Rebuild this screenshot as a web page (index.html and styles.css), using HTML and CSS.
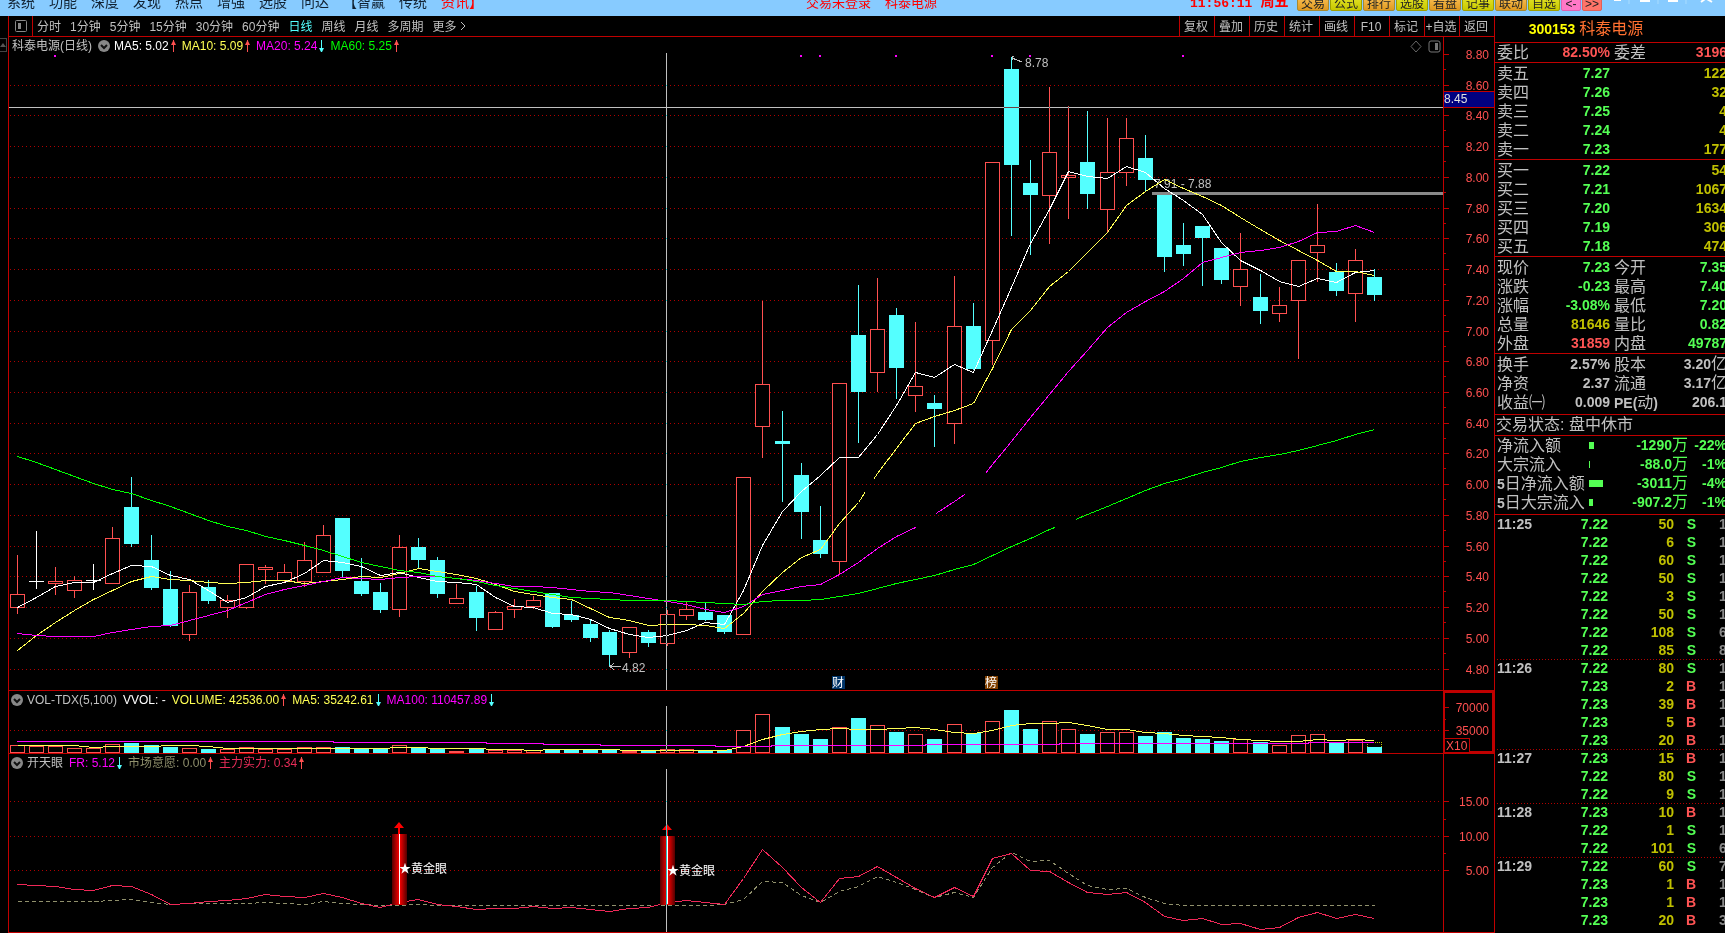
FILE: index.html
```
<!DOCTYPE html>
<html lang="zh-CN">
<head>
<meta charset="utf-8">
<title>科泰电源 300153</title>
<link rel="stylesheet" href="styles.css">
</head>
<body>
<header class="topbar">
  <nav class="menu">
    <a href="#">系统</a><a href="#">功能</a><a href="#">深度</a><a href="#">发现</a><a href="#">热点</a><a href="#">增强</a><a href="#">选股</a><a href="#">问达</a><a href="#">【智赢</a><a href="#">传统</a><a href="#" class="hot">资讯】</a>
  </nav>
  <div class="login"><span>交易未登录</span><span>科泰电源</span></div>
  <div class="clock"><time>11:56:11</time><span>周五</span></div>
  <div class="quick">
    <button class="orange">交易</button><button class="lime">公式</button><button class="orange">排行</button><button class="lime">选股</button><button class="orange">看盘</button><button class="lime">记事</button><button class="orange">联动</button><button class="lime">自选</button><button class="pink">&lt;-</button><button class="salmon">&gt;&gt;</button>
  </div>
  <svg class="winctl" width="123" height="12" viewBox="0 0 123 12" aria-hidden="true"><path d="M27 0v4M56 0v4M84 0v4" stroke="#a8dcff"/><path d="M12 0h7M38 1h10M66 1h10M99 2l4-3M105 -1l5 3" stroke="#fff" stroke-width="2" fill="none"/></svg>
</header>
<main class="workspace">
  <aside class="rail"><button class="fold" aria-label="展开"><svg width="7" height="14" viewBox="0 0 7 14"><path d="M0 8L3 4L6 8z" fill="#555"/></svg></button></aside>
  <section class="charts">
    <div class="toolbar">
      <button class="layout" aria-label="布局"><svg width="14" height="14" viewBox="0 0 14 14"><rect x="1.500" y="1.500" width="11" height="11" rx="1" fill="none" stroke="#888"/><path d="M4 4h3v6H4z" fill="#888"/></svg></button>
      <div class="periods">
        <button>分时</button><button>1分钟</button><button>5分钟</button><button>15分钟</button><button>30分钟</button><button>60分钟</button><button class="active">日线</button><button>周线</button><button>月线</button><button>多周期</button><button>更多 <svg width="6" height="10" viewBox="0 0 6 10"><path d="M1 1l4 4-4 4" fill="none" stroke="#c0c0c0"/></svg></button>
      </div>
      <div class="tools">
        <button>复权</button><button>叠加</button><button>历史</button><button>统计</button><button>画线</button><button>F10</button><button>标记</button><button>+自选</button><button>返回</button>
      </div>
    </div>
    <div class="panel price">
      <div class="plot">
        <svg id="pricePlot" viewBox="9 37 1434 653" preserveAspectRatio="none"></svg>
        <div class="legend">
          <span>科泰电源(日线)</span><svg class="drop" viewBox="0 0 12 12"><circle cx="6" cy="6" r="6"/><path d="M3 5l3 3 3-3"/></svg>
          <span class="white">MA5: 5.02<i class="up"></i></span><span class="yellow">MA10: 5.09<i class="up"></i></span><span class="magenta">MA20: 5.24<i class="down"></i></span><span class="green">MA60: 5.25<i class="up"></i></span>
        </div>
        <svg class="corner" width="31" height="13" viewBox="0 0 31 13"><path d="M6 1l5 5.500-5 5.500-5-5.500z" fill="none" stroke="#666"/><rect x="19" y="1" width="11" height="11" rx="2" fill="none" stroke="#777"/><path d="M25 3h3v7h-3z" fill="#777"/></svg>
      </div>
      <svg class="axis" id="priceAxis" viewBox="1443 37 51 653" preserveAspectRatio="none"></svg>
    </div>
    <div class="panel volume">
      <div class="plot">
        <svg id="volPlot" viewBox="9 691 1434 62" preserveAspectRatio="none"></svg>
        <div class="legend">
          <svg class="drop" viewBox="0 0 12 12"><circle cx="6" cy="6" r="6"/><path d="M3 5l3 3 3-3"/></svg>
          <span>VOL-TDX(5,100)</span><span class="white">VVOL: -</span><span class="yellow">VOLUME: 42536.00<i class="up"></i></span><span class="yellow">MA5: 35242.61<i class="down"></i></span><span class="magenta">MA100: 110457.89<i class="down"></i></span>
        </div>
      </div>
      <svg class="axis" id="volAxis" viewBox="1443 691 51 62" preserveAspectRatio="none"></svg>
    </div>
    <div class="panel signal">
      <div class="plot">
        <svg id="sigPlot" viewBox="9 754 1434 178" preserveAspectRatio="none"></svg>
        <div class="legend">
          <svg class="drop" viewBox="0 0 12 12"><circle cx="6" cy="6" r="6"/><path d="M3 5l3 3 3-3"/></svg>
          <span>开天眼</span><span class="magenta">FR: 5.12<i class="down"></i></span><span class="olive">市场意愿: 0.00<i class="up"></i></span><span class="rose">主力实力: 0.34<i class="up"></i></span>
        </div>
      </div>
      <svg class="axis" id="sigAxis" viewBox="1443 754 51 178" preserveAspectRatio="none"></svg>
    </div>
  </section>
  <aside class="quote">
    <h1><b>300153</b><span>科泰电源</span></h1>
    <table class="info tight"><tr><th>委比</th><td class="r">82.50%</td><th>委差</th><td class="r">3196</td></tr></table>
    <table class="info book">
      <tr><th>卖五</th><td class="g">7.27</td><td class="y">122</td></tr>
      <tr><th>卖四</th><td class="g">7.26</td><td class="y">32</td></tr>
      <tr><th>卖三</th><td class="g">7.25</td><td class="y">4</td></tr>
      <tr><th>卖二</th><td class="g">7.24</td><td class="y">4</td></tr>
      <tr><th>卖一</th><td class="g">7.23</td><td class="y">177</td></tr>
    </table>
    <table class="info book">
      <tr><th>买一</th><td class="g">7.22</td><td class="y">54</td></tr>
      <tr><th>买二</th><td class="g">7.21</td><td class="y">1067</td></tr>
      <tr><th>买三</th><td class="g">7.20</td><td class="y">1634</td></tr>
      <tr><th>买四</th><td class="g">7.19</td><td class="y">306</td></tr>
      <tr><th>买五</th><td class="g">7.18</td><td class="y">474</td></tr>
    </table>
    <table class="info">
      <tr><th>现价</th><td class="g">7.23</td><th>今开</th><td class="g">7.35</td></tr>
      <tr><th>涨跌</th><td class="g">-0.23</td><th>最高</th><td class="g">7.40</td></tr>
      <tr><th>涨幅</th><td class="g">-3.08%</td><th>最低</th><td class="g">7.20</td></tr>
      <tr><th>总量</th><td class="y">81646</td><th>量比</th><td class="g">0.82</td></tr>
      <tr><th>外盘</th><td class="r">31859</td><th>内盘</th><td class="g">49787</td></tr>
    </table>
    <table class="info pad">
      <tr><th>换手</th><td>2.57%</td><th>股本</th><td>3.20<span class="u">亿</span></td></tr>
      <tr><th>净资</th><td>2.37</td><th>流通</th><td>3.17<span class="u">亿</span></td></tr>
      <tr><th>收益㈠</th><td>0.009</td><th><b>PE(</b>动<b>)</b></th><td>206.1</td></tr>
    </table>
    <p class="status">交易状态: 盘中休市</p>
    <table class="flow">
      <tr><th>净流入额</th><td><i style="width:5px"></i></td><td>-1290<span class="u">万</span></td><td>-22%</td></tr>
      <tr><th>大宗流入</th><td><i style="width:1px"></i></td><td>-88.0<span class="u">万</span></td><td>-1%</td></tr>
      <tr><th><b>5</b>日净流入额</th><td><i style="width:14px"></i></td><td>-3011<span class="u">万</span></td><td>-4%</td></tr>
      <tr><th><b>5</b>日大宗流入</th><td><i style="width:4px"></i></td><td>-907.2<span class="u">万</span></td><td>-1%</td></tr>
    </table>
    <table class="ticks">
      <tr><th>11:25</th><td>7.22</td><td>50</td><td class="g">S</td><td>1</td></tr>
      <tr><th></th><td>7.22</td><td>6</td><td class="g">S</td><td>1</td></tr>
      <tr><th></th><td>7.22</td><td>60</td><td class="g">S</td><td>1</td></tr>
      <tr><th></th><td>7.22</td><td>50</td><td class="g">S</td><td>1</td></tr>
      <tr><th></th><td>7.22</td><td>3</td><td class="g">S</td><td>1</td></tr>
      <tr><th></th><td>7.22</td><td>50</td><td class="g">S</td><td>1</td></tr>
      <tr><th></th><td>7.22</td><td>108</td><td class="g">S</td><td>6</td></tr>
      <tr><th></th><td>7.22</td><td>85</td><td class="g">S</td><td>8</td></tr>
      <tr class="minute"><th>11:26</th><td>7.22</td><td>80</td><td class="g">S</td><td>1</td></tr>
      <tr><th></th><td>7.23</td><td>2</td><td class="r">B</td><td>1</td></tr>
      <tr><th></th><td>7.23</td><td>39</td><td class="r">B</td><td>1</td></tr>
      <tr><th></th><td>7.23</td><td>5</td><td class="r">B</td><td>1</td></tr>
      <tr><th></th><td>7.23</td><td>20</td><td class="r">B</td><td>1</td></tr>
      <tr class="minute"><th>11:27</th><td>7.23</td><td>15</td><td class="r">B</td><td>1</td></tr>
      <tr><th></th><td>7.22</td><td>80</td><td class="g">S</td><td>1</td></tr>
      <tr><th></th><td>7.22</td><td>9</td><td class="g">S</td><td>1</td></tr>
      <tr class="minute"><th>11:28</th><td>7.23</td><td>10</td><td class="r">B</td><td>1</td></tr>
      <tr><th></th><td>7.22</td><td>1</td><td class="g">S</td><td>1</td></tr>
      <tr><th></th><td>7.22</td><td>101</td><td class="g">S</td><td>6</td></tr>
      <tr class="minute"><th>11:29</th><td>7.22</td><td>60</td><td class="g">S</td><td>7</td></tr>
      <tr><th></th><td>7.23</td><td>1</td><td class="r">B</td><td>1</td></tr>
      <tr><th></th><td>7.23</td><td>1</td><td class="r">B</td><td>1</td></tr>
      <tr><th></th><td>7.23</td><td>20</td><td class="r">B</td><td>3</td></tr>
    </table>
  </aside>
</main>
<script src="chart.js"></script>
</body>
</html>
```
FILE: styles.css
```
*, *::after { box-sizing: border-box; }
body {
  margin: 0;
  height: 100vh;
  display: flex;
  flex-direction: column;
  overflow: hidden;
  background: #000;
  color: #c0c0c0;
  font: 12px/14px "Liberation Sans", "Noto Sans CJK SC", sans-serif;
}
button { margin: 0; padding: 0; border: 0; background: none; color: inherit; font: inherit; white-space: nowrap; }

/* top bar: its row of labels is cut by the top window edge */
.topbar {
  flex: none;
  height: 16px;
  display: flex;
  align-items: flex-start;
  overflow: hidden;
  background: #87cbff;
}
.menu { display: flex; gap: 14px; margin: -5px 0 0 7px; flex: 1; font-size: 14px; white-space: nowrap; }
.menu a { color: #102030; text-decoration: none; }
.menu .hot, .login, .clock { color: #f00; }
.login { display: flex; gap: 14px; margin-top: -4px; font-size: 13px; width: 384px; }
.clock { display: flex; gap: 8px; margin-top: -5px; width: 107px; font: bold 14px/14px "Liberation Mono", "Noto Sans CJK SC", monospace; white-space: nowrap; }
.clock time { font-size: 13px; line-height: 18px; }
.quick { display: flex; gap: 1px; margin-top: -7px; }
.quick button { width: 32px; height: 18px; padding-top: 3px; border: 1px solid #a88a30; border-radius: 2px; color: #222; line-height: 12px; }
.quick .orange { background: linear-gradient(#ffc860, #e09a20); }
.quick .lime { background: linear-gradient(#e8e830, #c8c800); border-color: #a0a000; }
.quick .pink { width: 20px; background: #ff78c8; border-color: #e060b0; }
.quick .salmon { width: 20px; background: #ff7468; border-color: #e06058; }
.winctl { flex: none; }

.workspace { flex: 1; display: flex; min-height: 0; }
.rail { flex: none; width: 9px; border-right: 1px solid #c00000; padding-top: 22px; }
.fold { display: block; width: 7px; height: 14px; border: 1px solid #444; border-left: 0; }
.fold svg { display: block; }
.charts { flex: 1; min-width: 0; display: grid; grid-template: 21px minmax(0, 654fr) minmax(0, 63fr) minmax(0, 179fr) / minmax(0, 1fr); }

.toolbar { display: flex; align-items: stretch; border-bottom: 1px solid #c00000; }
.layout { width: 24px; border-right: 1px solid #c00000; display: grid; place-items: center; }
.periods { flex: 1; display: flex; gap: 9px; padding: 1px 0 0 4px; }
.periods .active { color: #54ffff; }
.tools { display: flex; }
.tools button { width: 35px; border-left: 1px solid #c00000; padding: 1px 2px 0 0; }

.panel { display: flex; min-height: 0; border-bottom: 1px solid #c00000; }
.plot { flex: 1; min-width: 0; position: relative; }
.plot > svg:first-child { position: absolute; inset: 0; width: 100%; height: 100%; }
.axis { flex: none; width: 51px; height: 100%; }
.legend { position: absolute; left: 3px; top: 1px; height: 16px; display: flex; align-items: center; gap: 6px; white-space: nowrap; }
.legend .drop { width: 12px; height: 12px; margin-right: -2px; flex: none; }
.volume .legend, .signal .legend { left: 2px; }
.drop circle { fill: #888; }
.drop path { fill: none; stroke: #111; stroke-width: 2; }
.legend i { display: inline-block; position: relative; width: 5px; height: 12px; margin-left: 2px; vertical-align: -2px; background: linear-gradient(currentColor, currentColor) 2px 0 / 1px 100% no-repeat; }
.legend i::after { content: ""; position: absolute; left: 0; border: solid transparent; border-width: 0 2px; width: 5px; height: 0; }
.legend .up { color: #ff5050; }
.legend .up::after { top: 1px; border-bottom: 4px solid #ff5050; }
.legend .down { color: #54ffff; }
.legend .down::after { bottom: 0; border-top: 4px solid #54ffff; }
.corner { position: absolute; right: 2px; top: 3px; }
.white { color: #fff; }
.yellow { color: #ffff54; }
.magenta { color: #f0f; }
.green { color: #0f0; }
.olive { color: #90906c; }
.rose { color: #e82c58; }

.grid, .candles, .lines, .cross { shape-rendering: crispEdges; }
.grid path { stroke: #b00000; stroke-dasharray: 1 3; }
.tick { stroke: #c00000; shape-rendering: crispEdges; }
.axis text { fill: #ff5050; text-anchor: end; }
.axis .cursor { fill: #e0e0e0; text-anchor: start; }
.axis .unit { text-anchor: start; }
.note { fill: #c0c0c0; }
.badge { fill: #fff; font-size: 12px; }
.star { fill: #fff; }
.cross { stroke: #c0c0c0; mix-blend-mode: difference; }
.rise { fill: #000; stroke: #ff5050; }
.fall { fill: #54ffff; stroke: #54ffff; }
.flat { fill: none; stroke: #fff; }
.lines path { fill: none; }

.quote { flex: none; width: 231px; border-left: 1px solid #c00000; overflow: hidden; }
.quote h1 { margin: 0; height: 27px; border-bottom: 1px solid #c00000; display: flex; justify-content: center; align-items: center; gap: 4px; padding-right: 48px; font-size: 16px; font-weight: 400; line-height: 26px; color: #ff7030; }
.quote h1 b { color: #ff0; font-size: 14px; }
.quote table { width: 232px; table-layout: fixed; border-collapse: separate; border-spacing: 0; border-bottom: 1px solid #c00000; padding: 1px 0 0 2px; }
.quote .tight { padding-top: 0; }
.quote .pad { padding-bottom: 2px; }
.quote th, .quote td { padding: 0; height: 19px; line-height: 19px; white-space: nowrap; overflow: visible; }
.quote th { text-align: left; font-weight: 400; font-size: 16px; width: 54px; }
.quote td { text-align: right; font-weight: 700; font-size: 14px; width: 59px; }
.quote td + th { padding-left: 4px; width: 58px; }
.quote th b { font-size: 14px; line-height: 14px; }
.u { font-size: 16px; font-weight: 400; line-height: 14px; }
.book td:last-child { width: 117px; }
.g { color: #54ff54; }
.r { color: #ff5454; }
.y { color: #c0c000; }
.status { margin: 0; height: 21px; padding-left: 1px; font-size: 16px; line-height: 19px; border-bottom: 1px solid #c00000; white-space: nowrap; }
.quote .flow { padding-top: 0; padding-bottom: 2px; color: #54ff54; }
.flow th { color: #c0c0c0; width: 92px; }
.flow td:nth-child(2) { width: 15px; text-align: left; }
.flow td:nth-child(3) { width: 84px; }
.flow td:nth-child(4) { width: 39px; }
.flow i { display: block; height: 7px; background: #54ff54; }
.quote .ticks { border-bottom: 0; padding-top: 0; }
.quote .ticks th, .quote .ticks td { height: 18px; line-height: 18px; font-size: 14px; font-weight: 700; }
.quote .ticks td:nth-child(2) { width: 57px; color: #54ff54; }
.quote .ticks td:nth-child(3) { width: 66px; color: #c0c000; }
.quote .ticks td:nth-child(4) { width: 22px; }
.quote .ticks td:nth-child(5) { width: 31px; padding-left: 23px; color: #888; text-align: left; }
.minute { background: repeating-linear-gradient(90deg, #b00000 0 1px, #000 1px 3px) top / 100% 1px no-repeat; }
```
FILE: chart.js
```
// Each candle: kind, high, open/close top, open/close bottom, low (plot units)
const candles = [
['r',555,594,607,613],['w',531,581,581,588],['r',567,581,583,594],['r',576,580,590,597],['w',564,580,580,589],['r',527,538,583,583],
['c',477,507,544,546],['c',535,560,588,589],['c',571,589,626,626],['r',585,592,634,640],['c',580,587,601,603],['r',595,600,607,617],
['r',564,564,607,608],['r',565,567,569,583],['r',564,572,580,582],['r',542,560,581,586],['r',525,535,572,572],['c',518,518,571,577],
['c',558,581,594,595],['c',583,592,610,612],['r',535,547,609,616],['c',538,547,560,567],['c',557,560,594,597],['r',584,598,603,603],
['c',586,592,618,630],['r',611,612,629,629],['r',599,606,609,617],['r',596,600,606,608],['c',593,593,627,627],['c',601,615,620,621],
['c',620,624,638,641],['c',630,632,655,666],['r',627,627,652,657],['c',630,632,643,646],['r',610,614,643,645],['r',601,609,615,619],
['c',602,612,620,620],['c',615,615,632,633],['r',477,477,634,634],['r',301,384,426,457],['c',411,441,444,501],['c',463,475,512,538],
['c',506,540,554,557],['r',383,383,561,574],['c',285,335,392,442],['r',278,329,372,391],['c',308,315,368,398],['r',322,386,395,411],
['c',395,403,409,446],['r',276,326,423,443],['c',303,326,369,369],['r',162,162,340,364],['c',57,69,165,235],['c',160,183,195,254],
['r',87,152,195,243],['r',106,175,177,218],['c',111,162,194,208],['r',118,172,209,231],['r',118,138,172,185],['c',135,158,180,191],
['c',195,195,257,271],['c',223,245,254,265],['c',226,226,238,285],['c',248,248,280,283],['r',233,269,286,305],['c',274,297,311,323],
['r',287,305,313,321],['r',260,260,300,358],['r',204,245,252,281],['c',263,272,291,295],['r',249,260,293,321],['c',269,277,295,300]];
const volTop = [745,746,746,748,748,744,743,745,747,748,749,749,747,749,749,747,747,747,748,749,745,748,748,751,749,750,750,750,749,749,749,750,751,750,749,749,750,750,730,714,727,734,739,727,718,725,732,734,739,724,733,721,710,729,721,729,734,732,732,736,732,738,739,741,739,742,745,735,734,743,740,747];
const ma5 = [607,597,586,582,582,573,565,566,575,579,590,602,597,586,582,573,560,562,566,575,572,577,581,582,584,597,606,607,613,614,619,628,634,637,635,630,622,624,590,545,511,491,475,457,457,434,405,372,377,364,372,330,287,243,209,171,176,178,166,172,188,200,214,242,260,270,281,286,278,282,272,270];
const ma10 = [650,635,622,610,599,590,581,576,579,580,582,583,582,580,580,583,581,579,576,577,573,568,571,574,578,584,591,594,597,599,608,617,620,625,624,624,625,628,613,591,572,557,549,523,502,473,448,423,416,410,403,368,329,310,286,271,252,232,205,191,179,188,196,205,217,229,240,250,260,271,271,275];
const ma20 = [633,635,636,636,636,632,629,626,625,620,615,610,602,594,589,585,581,577,578,579,577,576,576,578,580,583,586,586,587,589,591,592,595,598,601,604,609,612,606,594,590,586,584,574,562,548,536,527,514,501,488,464,441,417,394,371,350,327,312,301,291,278,262,257,252,250,247,241,232,231,225,232];
const ma60 = [456,462,469,476,483,489,493,500,506,513,520,526,530,536,540,545,550,556,562,566,570,572,576,578,581,585,588,591,594,597,598,599,600,600,600,601,602,603,604,601,600,600,599,596,593,588,583,579,575,569,564,555,546,538,529,522,514,506,498,490,483,478,472,467,461,457,454,450,445,440,434,429];
const vma5 = [745,745,745,745,747,746,746,746,745,745,746,748,748,748,748,748,748,748,748,748,747,747,748,748,748,749,749,750,749,749,749,749,750,750,750,750,750,750,746,739,734,731,729,728,729,729,728,727,729,732,733,730,725,723,723,722,725,729,729,732,733,735,736,737,739,740,741,741,739,740,739,740];
const force = [884,885,886,889,890,885,886,894,904,903,901,900,898,894,896,897,893,897,903,907,902,899,904,906,909,908,908,906,908,907,909,911,908,907,902,900,902,904,878,849,867,887,902,878,876,866,877,888,897,887,896,858,853,870,871,882,892,894,892,902,916,920,918,924,923,929,927,917,912,918,914,918];
const will = [901,901,901,901,901,900,899,902,904,903,903,903,903,902,903,904,901,903,904,905,905,904,905,905,905,905,905,905,905,905,905,905,905,905,905,905,905,904,899,881,882,895,902,891,886,876,882,889,897,892,897,867,852,861,860,873,885,889,888,897,903,905,905,905,905,905,905,905,905,905,905,905];

const xAt = i => Math.floor(17.2 + i * 19.12);
const colors = { r: 'rise', c: 'fall', w: 'flat' };
const put = (id, s) => { document.getElementById(id).innerHTML = s; };

function line(series, color, gaps = [], extra = '') {
  const pts = series.map((y, i) => [xAt(i) + .5, y + .5]);
  const at = x => {
    const k = pts.findIndex(p => p[0] > x);
    const [a, b] = [pts[k - 1], pts[k]];
    return a[1] + (b[1] - a[1]) * (x - a[0]) / (b[0] - a[0]);
  };
  const edges = [0, ...gaps.flat(), 5000];
  let d = '';
  for (let e = 0; e < edges.length; e += 2) {
    const seg = pts.filter(p => p[0] > edges[e] && p[0] < edges[e + 1]);
    if (e > 0) seg.unshift([edges[e], at(edges[e])]);
    if (e + 2 < edges.length) seg.push([edges[e + 1], at(edges[e + 1])]);
    d += 'M' + seg.map(p => p.join(' ')).join('L');
  }
  return `<path d="${d}" stroke="${color}" ${extra}/>`;
}
const grid = ys => '<g class="grid">' + ys.map(y => `<path d="M10 ${y}.5H1440"/>`).join('') + '</g>';

// Price
const levels = [...Array(21)].map((_, i) => ({ v: (8.8 - i * .2).toFixed(2), y: Math.floor(54.45 + i * 30.73) }));
let s = grid(levels.slice(1).map(l => l.y)) + '<g class="candles">';
candles.forEach(([k, h, t, b, l], i) => {
  const x = xAt(i), c = x + .5;
  s += k === 'w'
    ? `<path class="flat" d="M${c} ${h}V${l + 1}M${x - 7} ${t + .5}h15"/>`
    : `<path class="${colors[k]}" d="M${c} ${h}V${t}M${c} ${b}V${l + 1}"/><rect class="${colors[k]}" x="${x - 6.5}" y="${t + .5}" width="14" height="${Math.max(b - t - (k === 'c' ? 1 : 0), 1)}"/>`;
});
s += '</g><rect x="1152" y="192" width="291" height="3" fill="#888"/><text class="note" x="1154" y="188">7.91 - 7.88</text>';
s += '<g class="lines">' + line(ma5, '#fff') + line(ma10, '#ffff54', [[865, 874]]) + line(ma20, '#f0f', [[916, 936], [965, 986]]) + line(ma60, '#0f0', [[1055, 1076]]) + '</g>';
s += [55, 801, 820, 896, 992, 1030, 1183].map(x => `<rect x="${x - 1}" y="55" width="2" height="2" fill="#f0f"/>`).join('');
s += '<path class="tick" style="stroke:#c0c0c0" fill="none" d="M1014 56h-2v4M1012 58l10 4M610 666.500h11M614 663l-4 3.500 4 3.500"/><text class="note" x="1025" y="67">8.78</text><text class="note" x="622" y="672">4.82</text>';
s += '<rect x="832" y="676" width="13" height="13" fill="#003468"/><text class="badge" x="832" y="687">财</text><rect x="985" y="676" width="13" height="13" fill="#804000"/><text class="badge" x="985" y="687">榜</text>';
s += '<path class="cross" d="M9 107.500H1443M666.500 53V690"/>';
put('pricePlot', s);

function axis(y0, y1, labels, minors) {
  return `<path class="tick" fill="none" d="M1443.500 ${y0}V${y1}${labels.map(l => `M1444 ${l.y}.5h5`).join('')}${minors.map(y => `M1444 ${y}.5h2`).join('')}"/>` +
    labels.map(l => `<text x="1489" y="${l.y + 5}">${l.v}</text>`).join('');
}
put('priceAxis', axis(37, 690, levels, levels.slice(0, 20).map(l => l.y + 15)) +
  '<rect x="1444" y="91" width="50" height="17" fill="#000080"/><path class="tick" d="M1444 91.500h50M1444 107.500h50"/><text class="cursor" x="1444" y="103">8.45</text>');

// Volume
s = grid([730]) + '<g class="candles">';
candles.forEach(([k], i) => {
  const x = xAt(i), c = k === 'c' ? 'fall' : 'rise';
  s += `<rect class="${c}" x="${x - 6.5}" y="${volTop[i] + .5}" width="14" height="${752 - volTop[i]}"/>`;
});
s += '<path d="M1367.500 747v-4.500h14v5" fill="none" stroke="#c0c000" stroke-dasharray="1 1"/></g><g class="lines">' + line(vma5, '#ffff54');
s += '<path stroke="#f0f" d="M17 741.500H333V742.500H486V743.500H543V744.500H600V745.500H715V746.500H771V745.500H925V744.500H1059V743.500H1308V742.500H1374"/></g>';
s += '<path class="cross" d="M666.500 706V752"/>';
put('volPlot', s);
put('volAxis', axis(691, 753, [{ v: '70000', y: 707 }, { v: '35000', y: 730 }], [719]) +
  '<path class="tick" fill="none" stroke-width="2" d="M1444 692h49v60h-49z"/><rect class="tick" x="1444.500" y="738.500" width="25" height="14" fill="#000"/><text class="unit" x="1446" y="750">X10</text>');

// Signal
s = '<defs><linearGradient id="bar"><stop offset="0" stop-color="#500"/><stop offset=".5" stop-color="#f00"/><stop offset="1" stop-color="#500"/></linearGradient></defs>';
s += grid([801, 836, 870]) + '<g class="lines">' + line(will, '#90906c', [], 'stroke-dasharray="4 3"') + line(force, '#f02858') + '</g>';
[[399, 834], [667, 836]].forEach(([x, y]) => {
  s += `<rect x="${x - 7}" y="${y}" width="15" height="${905 - y}" fill="url(#bar)"/><path d="M${x} ${y - 12}l5 6h-4v6h-2v-6h-4z" fill="#f00"/><path class="tick" style="stroke:#fff" d="M${x + .5} ${y}V904"/><text class="star" x="${x}" y="${y + 39}">★黄金眼</text>`;
});
s += '<path class="cross" d="M666.500 769V932"/>';
put('sigPlot', s);
put('sigAxis', axis(754, 932, [{ v: '15.00', y: 801 }, { v: '10.00', y: 836 }, { v: '5.00', y: 870 }], [819, 853]));
```
